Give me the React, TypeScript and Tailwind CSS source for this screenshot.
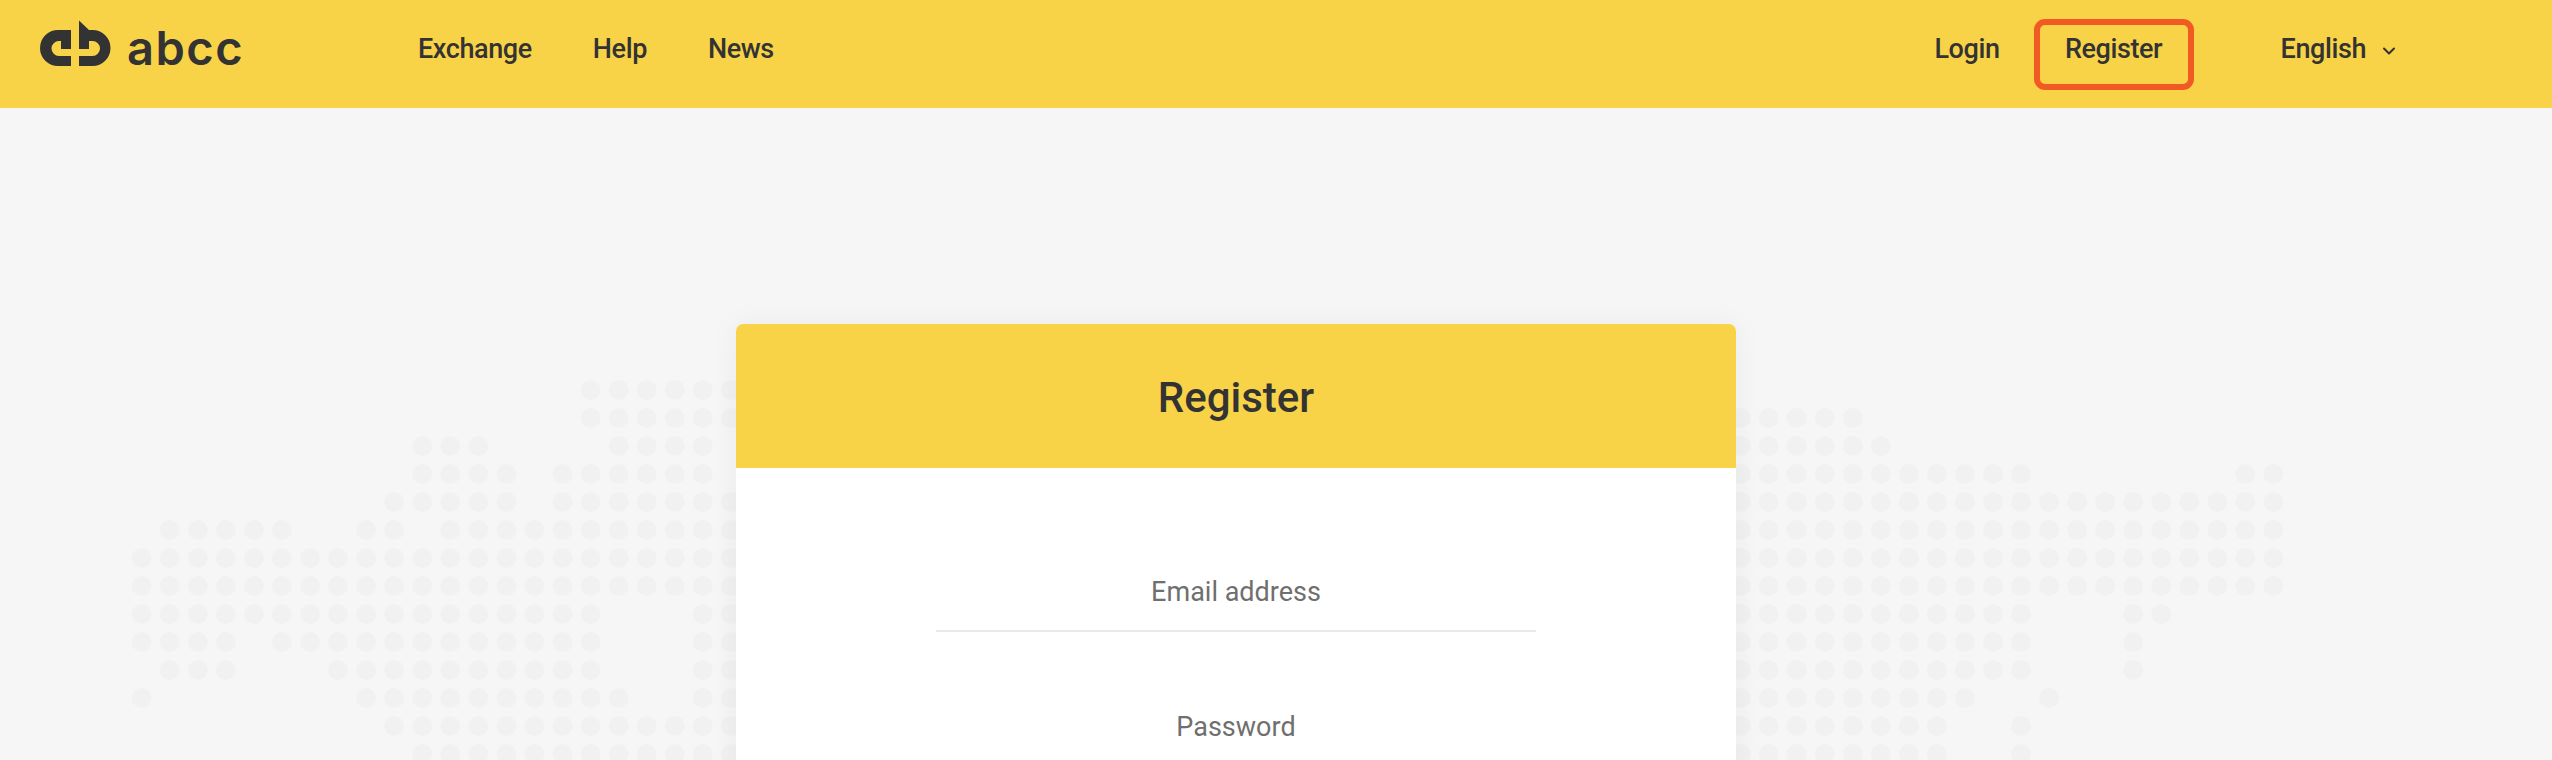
import { ChevronDown } from "lucide-react";

// rows of the dotted world map: [first, last] column ranges per row
const leftRows: [number, number][][] = [
  [[16, 21]],
  [[16, 21]],
  [[10, 12], [17, 20]],
  [[10, 13], [15, 20]],
  [[9, 13], [15, 21]],
  [[1, 5], [8, 9], [11, 21]],
  [[0, 21]],
  [[0, 21]],
  [[0, 16], [20, 21]],
  [[0, 3], [5, 16], [20, 21]],
  [[1, 3], [7, 16], [20, 21]],
  [[0, 0], [8, 17], [20, 21]],
  [[9, 21]],
  [[10, 21]],
];

const rightRows: [number, number][][] = [
  [],
  [[0, 4]],
  [[0, 5]],
  [[0, 10], [18, 19]],
  [[0, 19]],
  [[0, 19]],
  [[0, 19]],
  [[0, 19]],
  [[0, 10], [14, 15]],
  [[0, 10], [14, 14]],
  [[0, 10], [14, 14]],
  [[0, 8], [11, 11]],
  [[0, 7], [10, 10]],
  [[0, 7], [10, 10]],
];

function dots(rows: [number, number][][], offset: number) {
  const out: { x: number; y: number }[] = [];
  rows.forEach((ranges, r) => {
    ranges.forEach(([a, b]) => {
      for (let c = a; c <= b; c++) {
        out.push({ x: 141.7 + (c + offset) * 28.05, y: 390 + r * 28 });
      }
    });
  });
  return out;
}

function WorldMap() {
  const all = [...dots(leftRows, 0), ...dots(rightRows, 57)];
  return (
    <svg className="absolute left-0 top-0" width="2552" height="760" viewBox="0 0 2552 760">
      {all.map((d) => (
        <circle key={d.x + "-" + d.y} cx={d.x} cy={d.y} r="10" fill="#f1f1f1" />
      ))}
    </svg>
  );
}

function Logo() {
  return (
    <a href="#" className="flex w-[201px] items-center">
      <svg className="mb-[11px] shrink-0" width="71" height="47" viewBox="40 20 71 47" fill="#333333">
        <path d="M71 30H58A18 18 0 0 0 58 66H71V56H59A7.5 7.5 0 0 1 59 41H61V49H71Z" />
        <path d="M79 20.5L89 30H92.5A18 18 0 0 1 92.5 66H79V56H92.5A7.5 7.5 0 0 0 92.5 41H89V49H79Z" />
      </svg>
      <span className="mb-[3px] ml-[16px] font-['Inter',sans-serif] text-[47px] font-semibold leading-[47px] tracking-[1.5px] text-[#333333]">
        abcc
      </span>
    </a>
  );
}

export default function App() {
  return (
    <div className="relative h-[760px] overflow-hidden bg-[#f6f6f6] font-['Roboto',sans-serif] text-[#333333]">
      <WorldMap />

      <header className="relative flex h-[108px] items-center bg-[#f9d347] pb-[10px] pl-[40px] text-[27px] font-medium leading-[36px] tracking-[-0.4px]">
        <Logo />
        <nav className="ml-[177px] flex gap-[61px]">
          <a href="#">Exchange</a>
          <a href="#">Help</a>
          <a href="#">News</a>
        </nav>
        <div className="ml-auto flex items-center pr-[153px]">
          <a href="#">Login</a>
          <a
            href="#"
            className="ml-[34px] mt-[11px] flex h-[71px] w-[160px] items-center justify-center rounded-[11px] border-[6px] border-[#f15a22] pb-[11px]"
          >
            Register
          </a>
          <button className="ml-[87px] flex items-center font-medium">
            English
            <ChevronDown size={20} strokeWidth={2.5} className="ml-[13px] mt-[4px]" />
          </button>
        </div>
      </header>

      <main className="relative pl-[736px] pt-[216px]">
        <div className="w-[1000px] overflow-hidden rounded-t-[7px] bg-white shadow-[0_0_30px_rgba(0,0,0,0.05)]">
          <h1 className="flex h-[144px] items-center justify-center bg-[#f9d347] pt-[3px] text-[42px] font-medium">
            Register
          </h1>
          <form className="flex h-[400px] flex-col items-center pt-[106px] text-[27px] leading-[36px] text-[#6f6f6f]">
            <div className="w-[600px] border-b-2 border-[#e9e9e9] pb-[20px] text-center">Email address</div>
            <div className="mt-[77px] w-[600px] text-center">Password</div>
          </form>
        </div>
      </main>
    </div>
  );
}
